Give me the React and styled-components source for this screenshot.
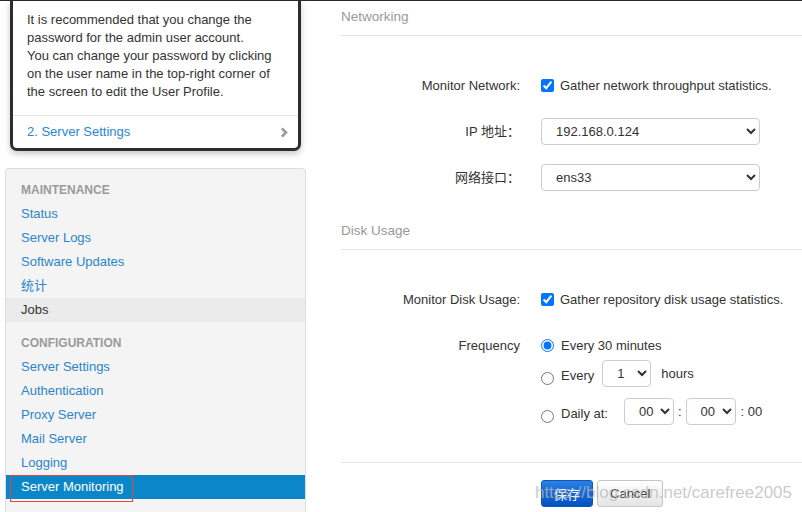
import React from "react";
import styled, {createGlobalStyle} from "styled-components";

const GlobalStyle = createGlobalStyle`
  html, body {
    margin: 0;
    height: 100%;
    overflow: hidden;
    background: #ffffff;
  }
  body {
    font-family: "Liberation Sans", Arial, "Noto Sans CJK SC", sans-serif;
    font-size: 13px;
    color: #333;
  }
`;

const Page = styled.div`
  position: relative;
  display: flex;
  gap: 35px;
  height: 512px;
  padding-left: 5px;
  border-top: 1px solid #2a2a2a;
  box-sizing: border-box;
`;

const LeftCol = styled.div`
  flex: none;
  width: 301px;
  display: flex;
  flex-direction: column;
`;

const Card = styled.div`
  margin: 0 5px;
  background: #fff;
  border: 3px solid #2d2d2d;
  border-top: 0;
  border-radius: 0 0 7px 7px;
  box-shadow: 0 3px 6px rgba(0, 0, 0, 0.22);
`;

const CardBody = styled.div`
  padding: 10px 14px 14px;
  line-height: 18px;
`;

const CardFooter = styled.div`
  display: flex;
  justify-content: space-between;
  align-items: center;
  padding: 7px 10px 7px 14px;
  line-height: 18px;
  border-top: 1px solid #e6e6e6;
  color: #2a88d2;
`;

const Sidebar = styled.div`
  flex: 1;
  margin-top: 17px;
  padding-top: 9px;
  background: #f4f4f4;
  border: 1px solid #dedede;
  border-bottom: 0;
  border-radius: 4px 4px 0 0;
`;

const NavHeading = styled.div`
  margin-top: ${(p) => p.$gap || 0}px;
  padding: 0 15px;
  line-height: 24px;
  font-size: 12px;
  font-weight: bold;
  color: #9a9a9a;
  text-transform: uppercase;
`;

const NavItem = styled.div`
  position: relative;
  padding: 0 15px;
  line-height: 24px;
  color: ${(p) => (p.$active ? "#fff" : p.$hover ? "#333" : "#2b85cc")};
  background: ${(p) => (p.$active ? "#0b87c9" : p.$hover ? "#ebebeb" : "transparent")};
`;

const Annotation = styled.span`
  position: absolute;
  left: 4px;
  top: 0;
  width: 123px;
  height: 27px;
  box-sizing: border-box;
  border: 1px solid #e5453c;
`;

const Content = styled.div`
  flex: 1;
  min-width: 0;
`;

const SectionHeader = styled.div`
  margin-top: ${(p) => p.$gap || 0}px;
  padding: 7px 0 9px;
  line-height: 18px;
  font-size: 13.5px;
  color: #999;
  border-bottom: 1px solid #e5e5e5;
`;

const Form = styled.div`
  display: grid;
  grid-template-columns: 179px 1fr;
  column-gap: 21px;
  row-gap: 19px;
  margin-top: 36px;
`;

const Label = styled.div`
  align-self: start;
  text-align: right;
  line-height: 27px;
  color: #333;
`;

const Control = styled.div`
  display: flex;
  align-items: center;
  gap: 6px;
  min-height: 27px;
`;

const Check = styled.input`
  width: 13px;
  height: 13px;
  margin: ${(p) => (p.$low ? "9px 0 0" : "0")};
`;

const Select = styled.select`
  width: ${(p) => p.$w}px;
  height: 27px;
  margin-left: ${(p) => p.$ml || 0}px;
  padding: 0 0 0 ${(p) => p.$pl || 8}px;
  border: 1px solid #cccccc;
  border-radius: 4px;
  background: #fff;
  color: #333;
  font-family: inherit;
  font-size: 13px;
`;

const RadioList = styled.div`
  display: flex;
  flex-direction: column;
  gap: 1px;
`;

const RadioRow = styled.label`
  display: flex;
  align-items: center;
  height: 27px;
  margin-top: ${(p) => p.$gap || 0}px;
  gap: 7px;
`;

const Text = styled.span`
  margin: ${(p) => (p.$low ? "5px" : "0")} ${(p) => p.$m || 0}px 0;
  line-height: 18px;
  color: #333;
`;

const Actions = styled.div`
  display: grid;
  grid-template-columns: 179px 1fr;
  column-gap: 21px;
  margin-top: 37px;
  padding-top: 17px;
  border-top: 1px solid #e5e5e5;
`;

const Buttons = styled.div`
  display: flex;
  gap: 4px;
`;

const Button = styled.button`
  height: 27px;
  padding: 0 12px;
  border-radius: 3px;
  font-family: inherit;
  font-size: 13px;
  border: 1px solid ${(p) => (p.$primary ? "#0a58b8" : "#c6c6c6")};
  color: ${(p) => (p.$primary ? "#fff" : "#333")};
  background: ${(p) =>
    p.$primary
      ? "linear-gradient(#2a80e4, #0052c2)"
      : "linear-gradient(#ffffff, #e4e4e4)"};
`;

const Watermark = styled.div`
  position: absolute;
  right: 10px;
  top: 482px;
  font-size: 17px;
  line-height: 20px;
  color: rgba(185, 185, 185, 0.75);
  pointer-events: none;
`;

const Chevron = () => (
  <svg width="8" height="11" viewBox="0 0 8 11">
    <path d="M1.8 1.3 L6 5.5 L1.8 9.7" fill="none" stroke="#9a9a9a" strokeWidth="2.6" />
  </svg>
);

export default function App() {
  return (
    <Page>
      <GlobalStyle />
      <LeftCol>
        <Card>
          <CardBody>
            It is recommended that you change the password for the admin user account.
            <br />
            You can change your password by clicking on the user name in the top-right corner of
            the screen to edit the User Profile.
          </CardBody>
          <CardFooter>
            <span>2. Server Settings</span>
            <Chevron />
          </CardFooter>
        </Card>
        <Sidebar>
          <NavHeading>Maintenance</NavHeading>
          <NavItem>Status</NavItem>
          <NavItem>Server Logs</NavItem>
          <NavItem>Software Updates</NavItem>
          <NavItem>统计</NavItem>
          <NavItem $hover>Jobs</NavItem>
          <NavHeading $gap={9}>Configuration</NavHeading>
          <NavItem>Server Settings</NavItem>
          <NavItem>Authentication</NavItem>
          <NavItem>Proxy Server</NavItem>
          <NavItem>Mail Server</NavItem>
          <NavItem>Logging</NavItem>
          <NavItem $active>
            Server Monitoring
            <Annotation />
          </NavItem>
        </Sidebar>
      </LeftCol>

      <Content>
        <SectionHeader>Networking</SectionHeader>
        <Form>
          <Label>Monitor Network:</Label>
          <Control>
            <Check type="checkbox" defaultChecked />
            <Text>Gather network throughput statistics.</Text>
          </Control>
          <Label>IP 地址：</Label>
          <Control>
            <Select $w={219} $pl={10} defaultValue="192.168.0.124">
              <option>192.168.0.124</option>
            </Select>
          </Control>
          <Label>网络接口：</Label>
          <Control>
            <Select $w={219} $pl={10} defaultValue="ens33">
              <option>ens33</option>
            </Select>
          </Control>
        </Form>

        <SectionHeader $gap={24}>Disk Usage</SectionHeader>
        <Form>
          <Label>Monitor Disk Usage:</Label>
          <Control>
            <Check type="checkbox" defaultChecked />
            <Text>Gather repository disk usage statistics.</Text>
          </Control>
          <Label>Frequency</Label>
          <RadioList>
            <RadioRow>
              <Check type="radio" name="freq" defaultChecked />
              <Text>Every 30 minutes</Text>
            </RadioRow>
            <RadioRow>
              <Check type="radio" name="freq" $low />
              <Text $low>Every</Text>
              <Select $w={49} $pl={10} $ml={1} defaultValue="1">
                <option>1</option>
              </Select>
              <Text $m={3}>hours</Text>
            </RadioRow>
            <RadioRow $gap={10}>
              <Check type="radio" name="freq" $low />
              <Text $low>Daily at:</Text>
              <Select $w={50} $pl={10} $ml={9} defaultValue="00">
                <option>00</option>
              </Select>
              <Text $m={-3}>:</Text>
              <Select $w={50} $pl={10} defaultValue="00">
                <option>00</option>
              </Select>
              <Text $m={-2}>: 00</Text>
            </RadioRow>
          </RadioList>
        </Form>

        <Actions>
          <span />
          <Buttons>
            <Button $primary>保存</Button>
            <Button>Cancel</Button>
          </Buttons>
        </Actions>
      </Content>

      <Watermark>https://blog.csdn.net/carefree2005</Watermark>
    </Page>
  );
}
